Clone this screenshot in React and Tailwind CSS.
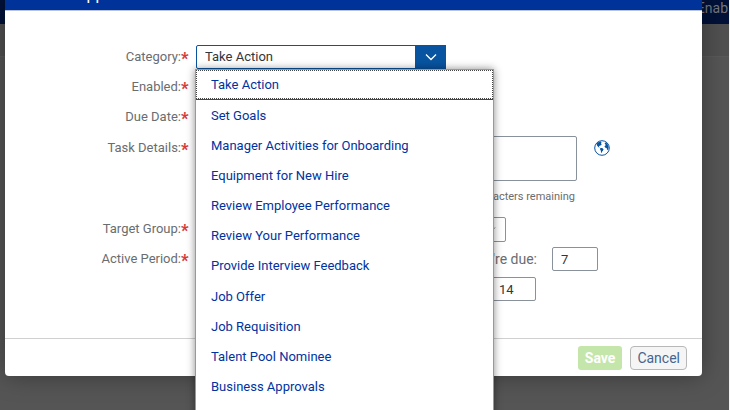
import { useState } from 'react'

const CATEGORIES = [
  'Take Action',
  'Set Goals',
  'Manager Activities for Onboarding',
  'Equipment for New Hire',
  'Review Employee Performance',
  'Review Your Performance',
  'Provide Interview Feedback',
  'Job Offer',
  'Job Requisition',
  'Talent Pool Nominee',
  'Business Approvals',
]

const inputClass = 'h-6 rounded-xs border border-[#89919a] bg-white px-2 text-[#32363a]'

function Field({ label, htmlFor, className = 'h-[30px]', children }) {
  return (
    <div className={`flex gap-2 ${className}`}>
      <label htmlFor={htmlFor} className="flex h-[30px] w-[183px] shrink-0 items-center justify-end text-[#6a6d70]">
        {label}:<Asterisk />
      </label>
      {children}
    </div>
  )
}

function Asterisk() {
  return <span className="w-[7px] pt-1 text-base leading-4 font-black text-[#d63a3a]">*</span>
}

function GlobeIcon() {
  return (
    <svg viewBox="0 0 16 16" className="size-4" aria-hidden="true">
      <circle cx="8" cy="8" r="7.3" fill="white" stroke="#0854a0" strokeWidth="1" />
      <path
        d="M2.6 3.8 4.3 2.2 6.8 1.6 7.5 2.4 6.9 3.4 8 4.2 6.8 4.9 6.1 5.9 5.3 5.8 4.9 6.6 5.9 7.4 4.6 7.2 3.2 5.8ZM6.3 8 8.2 8.1 9.6 9.3 8.9 10.8 8.1 11.6 7.6 13 7 12.4 6.9 10.7 6.1 9.4ZM10.6 3 12 2.5 13.6 4.2 14.4 6 14.6 8 13.8 10.2 12.9 9.2 12.7 7.9 11.4 7.7 10.5 6.6 11.1 5.4 12.2 5 11.2 4.4Z"
        fill="#0854a0"
      />
    </svg>
  )
}

function CategoryMenu({ value, onSelect }) {
  return (
    <div className="absolute top-6 -left-px z-10 w-[299px] border border-[#999] bg-white pb-12 shadow-[0_0_8px_rgba(0,0,0,0.45)]">
      <ul role="listbox" aria-label="Category" className="grid h-[332px] auto-rows-fr">
        {CATEGORIES.map(category => (
          <li key={category} role="option" aria-selected={category === value} className="flex">
            <button
              type="button"
              onClick={() => onSelect(category)}
              className={
                category === value
                  ? 'mb-px flex-1 border border-dotted border-[#444] px-[14px] text-left text-[#0033a0] shadow-[0_1px_0_#0854a0]'
                  : 'flex-1 px-[15px] text-left text-[#0033a0]'
              }
            >
              {category}
            </button>
          </li>
        ))}
      </ul>
    </div>
  )
}

export default function App() {
  const [category, setCategory] = useState('Take Action')

  return (
    <div className="relative h-screen overflow-hidden bg-[#555] font-['Roboto',sans-serif] text-[13px]">
      {/* Dimmed page behind the dialog */}
      <div className="mr-px flex h-6 items-start justify-end bg-[#001138] pr-px text-sm leading-4 text-[#73777d]">Enab</div>
      <div className="h-[33px] border-b border-[#595959] bg-[#505050]" />
      <div className="absolute inset-y-0 right-0 w-px bg-[#f5f5f5]" />

      <div
        role="dialog"
        aria-label="App"
        className="absolute top-0 right-7 left-[5px] rounded-b-[4px] bg-white shadow-[0_0_24px_rgba(0,0,0,0.35)]"
      >
        <header className="flex h-[11px] items-end overflow-hidden border-b border-[#b9c4dc] bg-[#003399] pb-[5px] pl-[71px]">
          <h1 className="text-base leading-5 text-white">App</h1>
        </header>

        <form className="pt-[31px]" onSubmit={e => e.preventDefault()}>
          <Field label="Category" htmlFor="category">
            <div className="relative mt-[3px] h-6 w-[250px]">
              <select
                id="category"
                value={category}
                onChange={e => setCategory(e.target.value)}
                className="h-6 w-full appearance-none rounded-xs border border-[#0854a0] bg-white pl-2 text-[#32363a]"
              >
                {CATEGORIES.map(c => <option key={c}>{c}</option>)}
              </select>
              <span className="pointer-events-none absolute inset-y-0 right-0 flex w-[31px] items-center justify-center bg-[#0854a0]">
                <svg viewBox="0 0 12 8" className="h-2 w-3" fill="none" stroke="white" strokeWidth="1.3" aria-hidden="true">
                  <path d="M1 1.5 6 6.5 11 1.5" />
                </svg>
              </span>
              <CategoryMenu value={category} onSelect={setCategory} />
            </div>
          </Field>

          <Field label="Enabled" htmlFor="enabled">
            <input id="enabled" type="checkbox" defaultChecked />
          </Field>

          <Field label="Due Date" htmlFor="due-date">
            <input id="due-date" type="text" className={`${inputClass} mt-[3px] w-[250px]`} />
          </Field>

          <Field label="Task Details" htmlFor="details" className="h-[82px] pt-px">
            <div className="w-[381px] pt-[3px]">
              <textarea id="details" className="block h-[45px] w-full resize-none rounded-xs border border-[#89919a] bg-white" />
              <p className="mt-1 pr-[2px] text-right text-[11px] leading-6 text-[#6a6d70]">characters remaining</p>
            </div>
            <button type="button" aria-label="Translations" className="mt-[7px] ml-[9px] size-4">
              <GlobeIcon />
            </button>
          </Field>

          <Field label="Target Group" htmlFor="target">
            <div className="relative mt-[3px] h-[25px] w-[310px]">
              <select id="target" className="h-[25px] w-full appearance-none rounded-xs border border-[#89919a] bg-white" />
              <svg viewBox="0 0 12 8" className="pointer-events-none absolute top-[9px] right-[10px] h-2 w-3" fill="none" stroke="#6a6d70" aria-hidden="true">
                <path d="M1 1.5 6 6.5 11 1.5" />
              </svg>
            </div>
          </Field>

          <Field label="Active Period" htmlFor="days-before" className="h-[94px]">
            <div>
              <div className="flex h-[30px] items-center gap-[15px]">
                <label htmlFor="days-before" className="w-[341px] text-right text-sm text-[#6a6d70]">before they&apos;re due:</label>
                <input id="days-before" type="text" defaultValue="7" className={`${inputClass} w-[46px]`} />
              </div>
              <div className="flex h-[30px] items-center pl-[294px]">
                <input aria-label="Days after" type="text" defaultValue="14" className={`${inputClass} w-[46px]`} />
              </div>
            </div>
          </Field>

          <footer className="flex h-[38px] items-center justify-end gap-2 border-t border-[#d0d0d0] pr-[15px] text-sm">
            <button type="submit" className="h-6 rounded-[3px] bg-[#c4e6ab] px-[7px] font-bold text-white">Save</button>
            <button type="button" className="h-6 rounded-[4px] border border-[#b8b8b8] bg-[#f5f5f5] px-[6px] text-[#44658f]">Cancel</button>
          </footer>
        </form>
      </div>
    </div>
  )
}
